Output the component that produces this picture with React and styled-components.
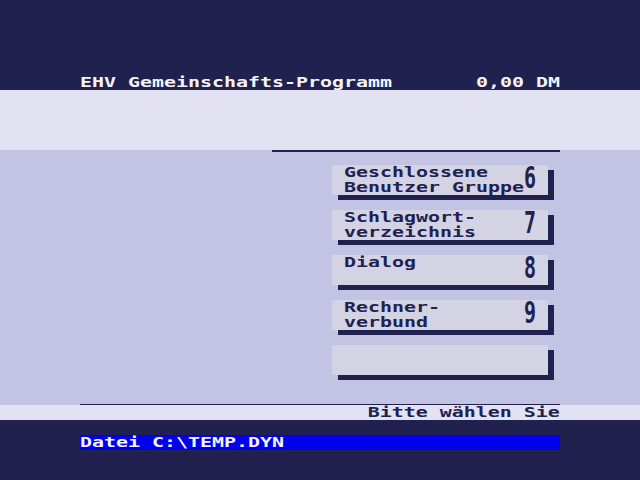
import React from "react";
import styled, { createGlobalStyle } from "styled-components";

const NAVY = "#21214f";
const LIGHT = "#e2e2f2";
const LAVENDER = "#c3c3e3";
const BOX = "#d3d3e3";
const BLUE = "#0000f0";
const WHITE = "#f4f4f8";
const SCALE = 12 / (14 * 0.60205);

const Global = createGlobalStyle`
  html, body { margin: 0; padding: 0; background: ${NAVY}; }
  body { width: 640px; height: 480px; overflow: hidden; }
`;

const Screen = styled.div`
  width: 640px;
  height: 480px;
  display: flex;
  flex-direction: column;
  background: ${NAVY};
`;

const Band = styled.div`
  height: ${(p) => p.$h}px;
  background: ${(p) => p.$bg};
  padding-top: ${(p) => p.$pt || 0}px;
  box-sizing: border-box;
  display: flex;
  flex-direction: column;
`;

const Row = styled.div`
  width: 480px;
  height: 15px;
  margin: 0 auto;
  display: flex;
  justify-content: ${(p) => p.$justify || "space-between"};
  background: ${(p) => p.$bg || "transparent"};
  overflow: visible;
`;

const Txt = styled.span`
  display: inline-block;
  white-space: pre;
  font-family: "DejaVu Sans Mono", monospace;
  font-weight: bold;
  font-size: 14px;
  line-height: 15px;
  height: 15px;
  color: ${(p) => p.$color};
  transform: scaleX(${SCALE});
  transform-origin: ${(p) => (p.$right ? "right" : "left")} center;
`;

const Content = styled.div`
  width: 480px;
  height: 100%;
  margin: 0 auto;
  display: flex;
  flex-direction: column;
`;

const TopRule = styled.div`
  margin-left: 192px;
  width: 288px;
  height: 2px;
  background: ${NAVY};
`;

const Menu = styled.div`
  margin-left: 252px;
  margin-top: 13px;
  display: flex;
  flex-direction: column;
  gap: 15px;
`;

const MenuBox = styled.div`
  width: 216px;
  height: 30px;
  box-sizing: border-box;
  padding-left: 12px;
  background: ${BOX};
  box-shadow: 6px 5px 0 ${NAVY};
  display: flex;
`;

const Labels = styled.div`
  width: 180px;
  display: flex;
  flex-direction: column;
`;

const Digit = styled.span`
  display: inline-block;
  font-family: "DejaVu Sans Mono", monospace;
  font-weight: bold;
  font-size: 14px;
  line-height: 15px;
  height: 15px;
  margin-top: 5px;
  color: ${NAVY};
  transform: scale(${SCALE}, 2.2);
  transform-origin: left 7.3px;
`;

const BottomRule = styled.div`
  margin-top: auto;
  height: 1px;
  background: ${NAVY};
`;

const items = [
  { lines: ["Geschlossene", "Benutzer Gruppe"], key: "6" },
  { lines: ["Schlagwort-", "verzeichnis"], key: "7" },
  { lines: ["Dialog"], key: "8" },
  { lines: ["Rechner-", "verbund"], key: "9" },
  { lines: [], key: "" },
];

export default function App() {
  return (
    <>
      <Global />
      <Screen>
        <Band $h={90} $bg={NAVY} $pt={75}>
          <Row>
            <Txt $color={WHITE}>EHV Gemeinschafts-Programm</Txt>
            <Txt $color={WHITE} $right>0,00 DM</Txt>
          </Row>
        </Band>
        <Band $h={60} $bg={LIGHT} />
        <Band $h={255} $bg={LAVENDER}>
          <Content>
            <TopRule />
            <Menu>
              {items.map((it, i) => (
                <MenuBox key={i}>
                  <Labels>
                    {it.lines.map((l) => (
                      <Txt key={l} $color={NAVY}>{l}</Txt>
                    ))}
                  </Labels>
                  {it.key && <Digit>{it.key}</Digit>}
                </MenuBox>
              ))}
            </Menu>
            <BottomRule />
          </Content>
        </Band>
        <Band $h={15} $bg={LIGHT}>
          <Row $justify="flex-end">
            <Txt $color={NAVY} $right>Bitte wählen Sie</Txt>
          </Row>
        </Band>
        <Band $h={60} $bg={NAVY} $pt={15}>
          <Row $justify="flex-start" $bg={BLUE}>
            <Txt $color={WHITE}>Datei C:\TEMP.DYN</Txt>
          </Row>
        </Band>
      </Screen>
    </>
  );
}
